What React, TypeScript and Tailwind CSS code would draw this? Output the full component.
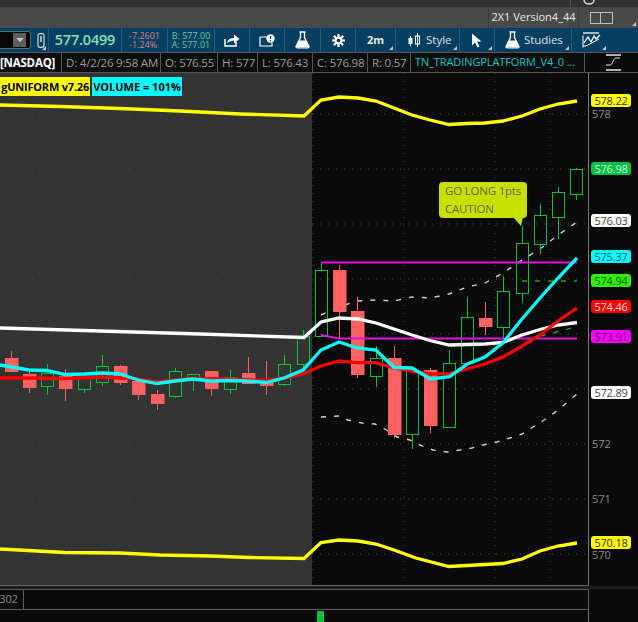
import type { ReactNode } from "react";

// [center x, body top, body bottom, wick top, wick bottom, up]
const candles: [number, number, number, number, number, boolean][] = [
  [11.5, 357, 371, 350, 371, false],
  [29.5, 373, 387, 371, 392, false],
  [47.5, 372, 385, 363, 394, true],
  [65.5, 375, 388, 368, 400, false],
  [84.5, 375, 388, 373, 392, true],
  [102.5, 365, 381, 354, 385, true],
  [120.5, 365, 382, 364, 384, false],
  [138.5, 380, 394, 380, 399, false],
  [157.5, 393, 403, 389, 409, false],
  [175.5, 370, 395, 367, 397, true],
  [193.5, 373, 376, 373, 390, true],
  [211.5, 370, 388, 370, 395, false],
  [230.5, 376, 388, 369, 393, true],
  [248.5, 372, 383, 356, 383, false],
  [266.5, 379, 385, 360, 394, false],
  [284.5, 363, 383, 354, 385, true],
  [303.5, 335, 363, 329, 367, true],
  [321.5, 269, 335, 262, 335, true],
  [339.5, 269, 311, 264, 337, false],
  [357.5, 310, 374, 296, 377, false],
  [376.5, 357, 375, 345, 386, true],
  [394.5, 357, 434, 345, 437, false],
  [412.5, 370, 433, 370, 448, true],
  [430.5, 369, 425, 367, 432, false],
  [449.5, 362, 426, 349, 426, true],
  [467.5, 316, 362, 296, 362, true],
  [485.5, 317, 326, 301, 334, false],
  [503.5, 290, 326, 275, 337, true],
  [522.5, 242, 292, 225, 302, true],
  [540.5, 214, 243, 203, 253, true],
  [558.5, 191, 216, 186, 238, true],
  [576.5, 168, 193, 167, 199, true],
];

const yellowTop =
  "0,104 60,105.5 120,107.5 180,110 240,113 304,115 321,99 339,96 358,97 376,100 394,107 412,114 430,119 449,123.5 467,122.5 485,122 503,120 522,115 540,108 558,103 577,100";
const yellowBottom =
  "0,548 65,551.5 120,552 160,554 210,555 250,556.5 304,557.5 321,541.5 339,539 358,540 376,543 394,549 416,557 449,565.5 503,562.5 522,558 540,550 558,545 577,542";
const whiteLine =
  "0,327 100,330 200,333 304,336.5 321,321 339,317 358,318 376,322 394,328 412,334 430,339.5 449,344 467,343.5 485,343 503,341.5 522,334 540,328.5 558,324 577,321.5";
const cyanLine =
  "0,364 29,369 47,369.5 65,373.5 84,373 102,372 120,373 138,379 157,382.5 175,380 193,378 211,380 230,379.5 248,380 266,381.5 284,377 303,369 321,349 339,341 357,347 376,349 394,366.5 412,367 430.5,378 449.5,375.7 468,362.7 485,356 503,341.7 522,318 540,297 558,277 577,257";
const redLine =
  "0,377 29,377 65,377.5 102,376 138,378 157,381 175,379 193,377.5 230,378 266,379.5 284,377 303,373 321,365 339,360 357,361.7 376,361.7 394,367 412,370 430.5,373 449.5,372.7 467,368 485,363 503,356 522,345 540,334 558,320 577,307";
const dashTop =
  "321,314 339,306 357,300 376,299 394,300 412,296 430,297 449,293 467,286 485,282 503,272 522,259 540,248 558,234 577,221";
const dashBottom =
  "321,416 339,415 348,419 362,422 375,423 385,428 397,436 410,439 420,444 433,449 447,451 460,449 472,447 483,444 497,441 510,437 522,433 533,426 544,419 554,412 564,404 577,393";

const gridX = [39, 129, 222, 313, 404, 495, 550];
const gridY = [113, 168, 223, 278, 333, 388, 443, 498, 553];

function Corner() {
  return (
    <span className="absolute right-[2px] bottom-[2px] w-0 h-0 border-l-[4px] border-l-transparent border-b-[4px] border-b-[#c4ccd2]" />
  );
}

function ToolCell({ className, children, corner }: { className: string; children?: ReactNode; corner?: boolean }) {
  return (
    <div className={`relative h-full shrink-0 flex items-center justify-center border-r border-[#2a5c79] ${className}`}>
      {children}
      {corner && <Corner />}
    </div>
  );
}

function InfoCell({ className, children }: { className: string; children: ReactNode }) {
  return (
    <div className={`h-full shrink-0 flex items-center border-r border-[#555] px-[4px] whitespace-nowrap overflow-hidden ${className}`}>
      {children}
    </div>
  );
}

function Flag({ className, children }: { className: string; children: ReactNode }) {
  return (
    <div className={`absolute left-[2px] w-[40px] h-[13px] rounded-[3px] flex items-center justify-center text-[11px] tracking-[-0.2px] leading-none ${className}`}>
      {children}
    </div>
  );
}

function AxisLabel({ className, children }: { className: string; children: ReactNode }) {
  return <div className={`absolute left-[3px] text-[11px] leading-none text-[#8a8a8a] ${className}`}>{children}</div>;
}

function Flask() {
  return (
    <svg width="15" height="18" viewBox="0 0 15 18">
      <path d="M4.5 1h6M5.5 1v5.5L1.2 15q-.6 1.800 1.300 1.800h10q1.900 0 1.300-1.800L9.500 6.500V1" fill="none" stroke="#fff" strokeWidth="1.300" />
      <path d="M4.200 9.500h6.600l3 6.600H1.200z" fill="#fff" />
    </svg>
  );
}

function Chart() {
  return (
    <svg className="absolute left-0 top-0 w-[589px] h-[512px]" viewBox="0 72 589 512">
      <rect x="0" y="72" width="312" height="512" fill="#333333" />
      {gridX.map((x) => (
        <line key={x} x1={x} y1="72" x2={x} y2="584" stroke="#444444" strokeWidth="1" strokeDasharray="1 7" />
      ))}
      {gridY.map((y) => (
        <line key={y} x1="0" y1={y} x2="589" y2={y} stroke="#444444" strokeWidth="1" strokeDasharray="1 7" />
      ))}
      <polyline points={dashTop} fill="none" stroke="#cfcfcf" strokeWidth="1.400" strokeDasharray="5 8" />
      <polyline points={dashBottom} fill="none" stroke="#cfcfcf" strokeWidth="1.400" strokeDasharray="5 8" />
      <line x1="522" y1="280" x2="577" y2="280" stroke="#33ee11" strokeWidth="1.200" strokeDasharray="5 8" />
      <polyline points="541,335 555,331.500 568,328 577,325" fill="none" stroke="#22cc11" strokeWidth="1.200" strokeDasharray="5 8" />
      {candles.map(([x, top, bottom, wickTop, wickBottom, up]) =>
        up ? (
          <g key={x} stroke="#00c432" strokeWidth="1" fill="none">
            <line x1={x} y1={wickTop} x2={x} y2={top} />
            <line x1={x} y1={bottom} x2={x} y2={wickBottom} />
            <rect x={x - 6} y={top + 0.5} width="12" height={bottom - top} />
          </g>
        ) : (
          <g key={x}>
            <line x1={x} y1={wickTop} x2={x} y2={wickBottom} stroke="#ff6060" strokeWidth="1" />
            <rect x={x - 6.5} y={top} width="13.500" height={bottom - top} fill="#ff6060" />
          </g>
        ),
      )}
      <line x1="321" y1="261.500" x2="577" y2="261.500" stroke="#e010e0" strokeWidth="2" />
      <polyline points="321,334 339,337.500 577,337.500" fill="none" stroke="#e010e0" strokeWidth="2" />
      <polyline points={yellowTop} fill="none" stroke="#ffff00" strokeWidth="3.300" />
      <polyline points={yellowBottom} fill="none" stroke="#ffff00" strokeWidth="3.300" />
      <polyline points={whiteLine} fill="none" stroke="#ffffff" strokeWidth="3.300" />
      <polyline points={redLine} fill="none" stroke="#ff0000" strokeWidth="3.300" />
      <polyline points={cyanLine} fill="none" stroke="#00ffff" strokeWidth="3.300" />
      <polygon points="513,216 523,216 521,225" fill="#c8e000" />
    </svg>
  );
}

export default function App() {
  return (
    <div className="w-[638px] h-[622px] overflow-hidden flex flex-col bg-[#0a0a0a] font-['Open_Sans',sans-serif]">
      {/* top strips */}
      <div className="h-[7px] shrink-0 bg-[#303030] flex justify-end">
        <div className="w-[68px] h-full border-l border-[#555] relative overflow-hidden">
          <svg className="absolute left-[10px] -top-[5px]" width="16" height="10" viewBox="0 0 16 10">
            <path d="M3 5a5 4 0 0 0 10 0" fill="none" stroke="#ddd" strokeWidth="1.500" />
          </svg>
        </div>
      </div>
      <div className="h-[21px] shrink-0 bg-[#494949] flex justify-end">
        <div className="w-[90px] h-full flex items-center justify-center border-l border-[#3a3a3a] text-[11px] text-[#e6e6e6] whitespace-nowrap">
          2X1 Version4_44
        </div>
        <div className="relative w-[60px] h-full flex items-center pl-[11px] border-l border-[#3a3a3a]">
          <div className="w-[11px] h-[12px] border border-[#bdbdbd]" />
          <div className="w-[12px] h-[12px] border border-l-0 border-[#bdbdbd]" />
          <Corner />
        </div>
      </div>

      {/* toolbar */}
      <div className="h-[24px] shrink-0 bg-[#053f61] flex items-center">
        <div className="w-[33px] h-full shrink-0 flex items-center pb-[1px]">
          <div className="w-[31px] h-[18px] bg-[#080808] border border-[#5a6a74] border-l-0 rounded-r-[3px] flex justify-end pr-[4px] items-center">
            <div className="w-[13px] h-[14px] bg-[#5d5d5d] flex items-center justify-center">
              <span className="w-0 h-0 border-x-[4px] border-x-transparent border-t-[4px] border-t-[#c8c8c8]" />
            </div>
          </div>
        </div>
        <ToolCell className="w-[16px]" corner>
          <svg width="8" height="15" viewBox="0 0 8 15">
            <rect x="1" y="0.700" width="6" height="13.600" rx="2" fill="none" stroke="#d8d8d8" strokeWidth="1.200" />
            <line x1="4" y1="3" x2="4" y2="9" stroke="#d8d8d8" strokeWidth="1.500" />
          </svg>
        </ToolCell>
        <ToolCell className="w-[73px]">
          <span className="text-[14.5px] font-semibold text-[#7fe3b5] tracking-[-0.2px]">577.0499</span>
        </ToolCell>
        <ToolCell className="w-[46px]">
          <div className="flex flex-col text-[9px] leading-[9px] text-[#db7f84]">
            <span>-7.2601</span>
            <span>-1.24%</span>
          </div>
        </ToolCell>
        <ToolCell className="w-[47px]">
          <div className="flex flex-col text-[9px] leading-[9px] text-[#5fcba3]">
            <span>B: 577.00</span>
            <span>A: 577.01</span>
          </div>
        </ToolCell>
        <ToolCell className="w-[35px]">
          <svg width="16" height="14" viewBox="0 0 16 14">
            <path d="M1 6v7h11V9" fill="none" stroke="#fff" strokeWidth="1.500" />
            <path d="M3 10q1-5 7-5V1.500L15.500 6 10 10.500V7.500q-4 0-7 2.500z" fill="#fff" />
          </svg>
        </ToolCell>
        <ToolCell className="w-[35px]">
          <svg width="16" height="13" viewBox="0 0 16 13">
            <path d="M1 3h8M1 3v9h12V9" fill="none" stroke="#fff" strokeWidth="1.200" />
            <circle cx="11.500" cy="4.500" r="4.200" fill="#fff" />
            <line x1="11.500" y1="2" x2="11.500" y2="5" stroke="#053f61" strokeWidth="1.300" />
            <line x1="11.500" y1="6" x2="11.500" y2="7.200" stroke="#053f61" strokeWidth="1.300" />
          </svg>
        </ToolCell>
        <ToolCell className="w-[36px]">
          <Flask />
        </ToolCell>
        <ToolCell className="w-[35px]">
          <svg width="13" height="13" viewBox="0 0 14 14">
            <g stroke="#fff" strokeWidth="2.400">
              <line x1="7" y1="0" x2="7" y2="14" />
              <line x1="0" y1="7" x2="14" y2="7" />
              <line x1="2" y1="2" x2="12" y2="12" />
              <line x1="12" y1="2" x2="2" y2="12" />
            </g>
            <circle cx="7" cy="7" r="4" fill="#fff" />
            <circle cx="7" cy="7" r="2" fill="#053f61" />
          </svg>
        </ToolCell>
        <ToolCell className="w-[40px]" corner>
          <span className="text-[11px] font-bold text-[#e8e8e8]">2m</span>
        </ToolCell>
        <ToolCell className="w-[64px] gap-[6px] justify-start pl-[12px]" corner>
          <svg width="12" height="15" viewBox="0 0 12 15" className="shrink-0">
            <rect x="0.500" y="5" width="4" height="6" fill="#fff" />
            <line x1="2.500" y1="3" x2="2.500" y2="13" stroke="#fff" />
            <rect x="7.500" y="3" width="4" height="8" fill="none" stroke="#fff" />
            <line x1="9.500" y1="0" x2="9.500" y2="14" stroke="#fff" />
          </svg>
          <span className="text-[11.5px] text-[#e0e0e0]">Style</span>
        </ToolCell>
        <ToolCell className="w-[35px]" corner>
          <svg width="12" height="15" viewBox="0 0 12 15">
            <path d="M1 0.500v12l3-3 2.500 5 2-1-2.500-5h4.500z" fill="#fff" />
          </svg>
        </ToolCell>
        <ToolCell className="w-[77px] gap-[4px] justify-start pl-[10px]" corner>
          <Flask />
          <span className="text-[11.5px] text-[#e0e0e0] tracking-[-0.1px]">Studies</span>
        </ToolCell>
        <div className="relative h-full flex-1 flex items-center pl-[10px]">
          <svg width="19" height="16" viewBox="0 0 19 16">
            <path d="M1 1h16" stroke="#fff" strokeWidth="1.300" />
            <path d="M1 3.500v12M1 14h3" stroke="#fff" strokeWidth="1" />
            <path d="M2 11l4-6 3 5 3-6 2 3 4-4" fill="none" stroke="#fff" strokeWidth="1.300" />
            <path d="M4 14l13-7" stroke="#fff" strokeWidth="1" />
          </svg>
          <span className="absolute left-[30px] bottom-[2px] w-0 h-0 border-l-[4px] border-l-transparent border-b-[4px] border-b-[#c4ccd2]" />
        </div>
      </div>

      {/* study info row */}
      <div className="h-[21px] shrink-0 flex border-y border-[#555] bg-[#0d0d0d] text-[11.5px] tracking-[-0.2px] text-[#9a9a9a]">
        <InfoCell className="w-[62px] !px-0 font-bold text-white">
          <span>[NASDAQ]</span>
        </InfoCell>
        <InfoCell className="w-[99px]">D: 4/2/26 9:58 AM</InfoCell>
        <InfoCell className="w-[57px]">O: 576.55</InfoCell>
        <InfoCell className="w-[40px]">H: 577</InfoCell>
        <InfoCell className="w-[55px]">L: 576.43</InfoCell>
        <InfoCell className="w-[55px]">C: 576.98</InfoCell>
        <InfoCell className="w-[43px]">R: 0.57</InfoCell>
        <InfoCell className="w-[174px] text-[#00c8c8] text-[11px] tracking-[-0.1px]">TN_TRADINGPLATFORM_V4_0 ...</InfoCell>
        <div className="flex-1 flex items-center justify-center bg-[#0a0a0a]">
          <svg width="17" height="17" viewBox="0 0 17 17" className="ml-[3px]">
            <path d="M1 1h15M1 16h15" stroke="#e8e8e8" strokeWidth="1.500" />
            <path d="M1 11h4c3 0 3-7 6-7h4" fill="none" stroke="#e8e8e8" strokeWidth="1" />
          </svg>
        </div>
      </div>

      {/* price chart */}
      <div className="h-[512px] shrink-0 flex">
        <div className="relative w-[589px] shrink-0 border-r border-[#777] overflow-hidden">
          <Chart />
          <div className="absolute left-0 top-[4px] flex gap-[2px] text-[11px] font-bold text-black leading-none">
            <div className="w-[90px] h-[19px] bg-[#ffff00] flex items-center justify-end pr-[1px] tracking-[-0.2px] whitespace-nowrap">gUNIFORM v7.26</div>
            <div className="w-[90px] h-[19px] bg-[#00ffff] flex items-center justify-center whitespace-nowrap">VOLUME = 101%</div>
          </div>
          <div className="absolute left-[439px] top-[109px] w-[88px] h-[36px] rounded-[4px] bg-[#c8e000] pl-[6px] text-[11.5px] tracking-[-0.2px] leading-[18px] text-[#5f6f10]">
            <div>GO LONG 1pts</div>
            <div>CAUTION</div>
          </div>
        </div>
        <div className="relative flex-1">
          <AxisLabel className="top-[35px]">578</AxisLabel>
          <AxisLabel className="top-[365px]">572</AxisLabel>
          <AxisLabel className="top-[420px]">571</AxisLabel>
          <AxisLabel className="top-[476px]">570</AxisLabel>
          <Flag className="top-[21px] bg-[#ffff00] text-[#333]">578.22</Flag>
          <Flag className="top-[89px] bg-[#00c040] text-[#d8f5e0]">576.98</Flag>
          <Flag className="top-[141px] bg-white text-[#444]">576.03</Flag>
          <Flag className="top-[177px] bg-[#00ffff] text-[#14585c]">575.37</Flag>
          <Flag className="top-[201px] bg-[#33ee00] text-[#146010]">574.94</Flag>
          <Flag className="top-[227px] bg-[#ff0000] text-[#ffe0e0]">574.46</Flag>
          <Flag className="top-[257px] bg-[#ff00ff] text-[#500050]">573.91</Flag>
          <Flag className="top-[313px] bg-white text-[#444]">572.89</Flag>
          <Flag className="top-[463px] bg-[#ffff00] text-[#333]">570.18</Flag>
        </div>
      </div>

      {/* volume pane */}
      <div className="h-[1px] shrink-0 w-[589px] bg-[#666]" />
      <div className="h-[3px] shrink-0 bg-[#1c1c1c]" />
      <div className="h-[21px] shrink-0 w-[589px] flex border-y border-r border-[#5c5c5c]">
        <div className="w-[24px] border-r border-[#5c5c5c] flex items-center justify-end pr-[5px] text-[11px] text-[#8a8a8a]">302</div>
      </div>
      <div className="flex-1 w-[589px] border-r border-[#777] flex pl-[317px]">
        <div className="w-[7px] h-full mt-[1px] bg-[#00c040]" />
      </div>
    </div>
  );
}
